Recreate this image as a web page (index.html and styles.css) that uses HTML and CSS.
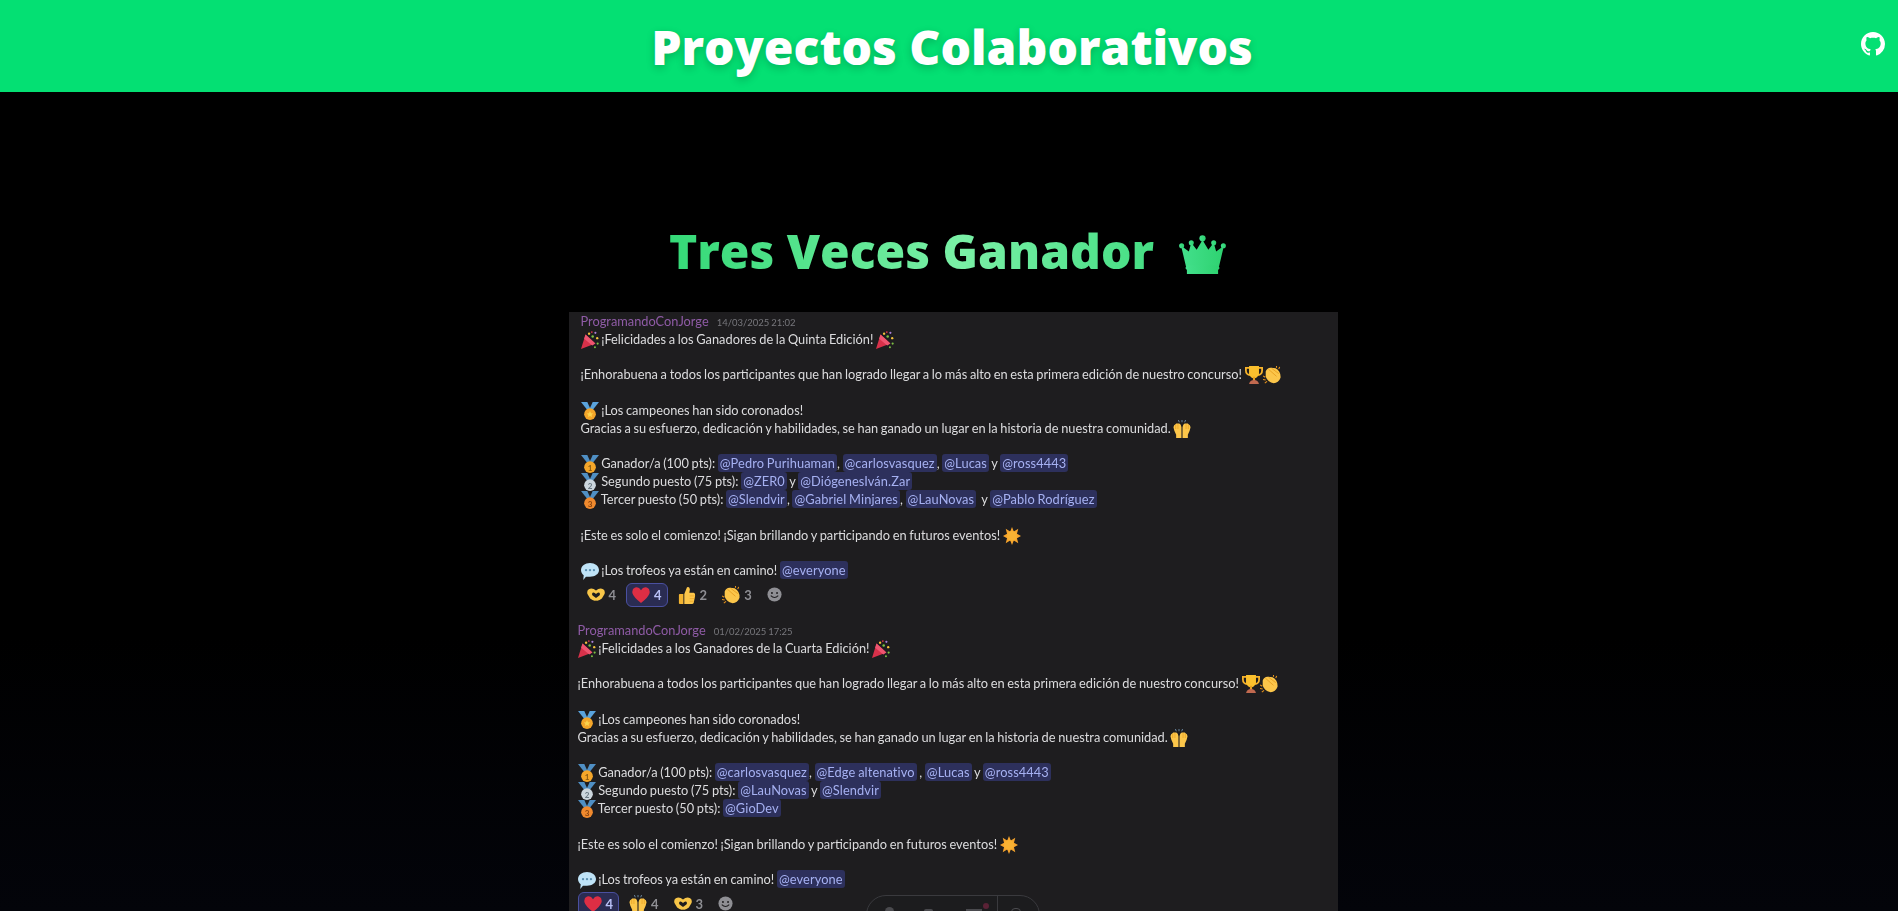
FILE: index.html
```html
<!DOCTYPE html>
<html lang="es">
<head>
    <meta charset="UTF-8">
    <meta name="viewport" content="width=device-width, initial-scale=1.0">
    <title>Proyectos Colaborativos</title>
    <link rel="stylesheet" href="styles.css">
</head>
<body>
    <svg class="sprites" aria-hidden="true">
        <symbol id="popper" viewBox="0 0 20 20">
            <path d="M0 20 L5 4 L16 14 Z" fill="#d8314a"/>
            <path d="M5 4 L16 14 L12.5 16 L3.5 8.5 Z" fill="#ee5570"/>
            <circle cx="9" cy="3" r="1.3" fill="#f5c33b"/><circle cx="13" cy="6" r="1.4" fill="#7ac143"/>
            <circle cx="16" cy="2" r="1.2" fill="#a87fd8"/><circle cx="18" cy="8" r="1.3" fill="#f5c33b"/>
            <circle cx="18.5" cy="14" r="1.2" fill="#7ac143"/><circle cx="12" cy="1.2" r="1" fill="#d8314a"/>
            <circle cx="15.5" cy="18" r="1.1" fill="#7ac143"/>
        </symbol>
        <symbol id="medal" viewBox="0 0 20 20">
            <path d="M0 0 H7 L11 9 H7 Z" fill="#5aa3dc"/>
            <path d="M20 0 H13 L9 9 H13 Z" fill="#5aa3dc"/>
            <circle cx="10" cy="13.5" r="6.5" fill="#f4a62a"/>
            <path d="M10 10 L11.2 12.5 L13.6 12.8 L11.8 14.4 L12.3 16.8 L10 15.6 L7.7 16.8 L8.2 14.4 L6.4 12.8 L8.8 12.5 Z" fill="#fcd34d"/>
        </symbol>
        <symbol id="medal-gold" viewBox="0 0 20 20">
            <path d="M0 0 H7 L11 9 H7 Z" fill="#4f8fc4"/>
            <path d="M20 0 H13 L9 9 H13 Z" fill="#4f8fc4"/>
            <circle cx="10" cy="13.5" r="6.5" fill="#f4a62a"/>
            <text x="10" y="17.5" class="medal-num medal-num-gold">1</text>
        </symbol>
        <symbol id="medal-silver" viewBox="0 0 20 20">
            <path d="M0 0 H7 L11 9 H7 Z" fill="#4f8fc4"/>
            <path d="M20 0 H13 L9 9 H13 Z" fill="#4f8fc4"/>
            <circle cx="10" cy="13.5" r="6.5" fill="#ccd6dd"/>
            <text x="10" y="17.5" class="medal-num medal-num-silver">2</text>
        </symbol>
        <symbol id="medal-bronze" viewBox="0 0 20 20">
            <path d="M0 0 H7 L11 9 H7 Z" fill="#4f8fc4"/>
            <path d="M20 0 H13 L9 9 H13 Z" fill="#4f8fc4"/>
            <circle cx="10" cy="13.5" r="6.5" fill="#f08a2e"/>
            <text x="10" y="17.5" class="medal-num medal-num-bronze">3</text>
        </symbol>
        <symbol id="trophy" viewBox="0 0 20 20">
            <path d="M0 1 H20 V5 Q20 10.5 14 11 H6 Q0 10.5 0 5 Z M2 3 V5 Q2 8.4 5 9 V3 Z M18 3 H15 V9 Q18 8.4 18 5 Z" fill="#f7b32b" fill-rule="evenodd"/>
            <path d="M4.5 0 H15.5 V8 Q14.5 13.5 10 13.5 Q5.5 13.5 4.5 8 Z" fill="#fbc02d"/>
            <rect x="8.8" y="12" width="2.4" height="4.5" fill="#e8a020"/>
            <path d="M4.5 20 Q5.5 15.5 10 15.5 Q14.5 15.5 15.5 20 Z" fill="#c1694f"/>
        </symbol>
        <symbol id="clap" viewBox="0 0 20 20">
            <path d="M3 6 Q5 1.5 9 2 L14 2.5 Q20 6 19.5 13 Q17 19.5 11 19 Q5.5 18 3 12 Z" fill="#fcc64a"/>
            <path d="M6 3.5 L15 11.5 M9.5 2.5 L17.5 8.5" stroke="#e89f20" stroke-width="1"/>
            <path d="M0 11 L2.5 12.5 M0 15 L3 15.5 M2 19 L4.5 17 M15 0 L15 2 M18.5 1 L17.5 3.5" stroke="#e8941c" stroke-width="1.2"/>
        </symbol>
        <symbol id="hands" viewBox="0 0 20 20">
            <path d="M.5 8 Q1 5 2.5 5 L3.5 4 H7 Q9 5 9.4 8 V20 H3.5 V16.5 L1.5 12 Z" fill="#fcc64a"/>
            <path d="M19.5 8 Q19 5 17.5 5 L16.5 4 H13 Q11 5 10.6 8 V20 H16.5 V16.5 L18.5 12 Z" fill="#fcc64a"/>
            <path d="M3 5 V10 M5.5 4.5 V10 M17 5 V10 M14.5 4.5 V10" stroke="#e89f20" stroke-width=".8"/>
            <path d="M6 0 L7 2.5 M10 0 V2.5 M14 0 L13 2.5" stroke="#6f8ea8" stroke-width="1"/>
        </symbol>
        <symbol id="burst" viewBox="0 0 20 20">
            <path d="M10 0 L12 5 L17 2 L15.5 7.5 L20 10 L15.5 12.5 L17 18 L12 15 L10 20 L8 15 L3 18 L4.5 12.5 L0 10 L4.5 7.5 L3 2 L8 5 Z" fill="#f6a42c"/>
            <circle cx="10" cy="10" r="5.5" fill="#f9b233"/>
        </symbol>
        <symbol id="bubble" viewBox="0 0 20 20">
            <path d="M10 1 C15.5 1 20 4.4 20 9 C20 13.4 15.5 16.5 10 16.5 L5.5 16.5 L2.5 20 L3 14.8 C1.2 13.4 0 11.4 0 9 C0 4.4 4.5 1 10 1 Z" fill="#bfe3f7"/>
            <circle cx="5.6" cy="9" r="1.3" fill="#5c8fb0"/><circle cx="10" cy="9" r="1.3" fill="#5c8fb0"/><circle cx="14.4" cy="9" r="1.3" fill="#5c8fb0"/>
        </symbol>
        <symbol id="heart-hands" viewBox="0 0 20 20">
            <path d="M10 5 Q6 1.5 2 3.5 Q-.5 5 .5 9 L3.5 14 Q7 17 10 16 Q13 17 16.5 14 L19.5 9 Q20.5 5 18 3.5 Q14 1.5 10 5 Z" fill="#f7c548"/>
            <path d="M10 9 Q8 6.6 6.2 7.6 Q4.8 8.8 6.2 10.6 L10 13.2 L13.8 10.6 Q15.2 8.8 13.8 7.6 Q12 6.6 10 9 Z" fill="#1e1d1f"/>
        </symbol>
        <symbol id="heart" viewBox="0 0 20 20">
            <path d="M10 18.8 Q1.8 12.5 .5 8 Q-.4 3.4 3.4 1.8 Q7.6 .6 10 4.6 Q12.4 .6 16.6 1.8 Q20.4 3.4 19.5 8 Q18.2 12.5 10 18.8 Z" fill="#dd2e44"/>
        </symbol>
        <symbol id="thumb" viewBox="0 0 20 20">
            <path d="M2 9 H6 V20 H2 Q1 20 1 19 V10 Q1 9 2 9 Z" fill="#f3b431"/>
            <path d="M7 9 L10 1.5 Q13 0 13.2 4 L12.6 7.5 H17.5 Q19.5 8 19 11 L17.5 18.5 Q17 20 15.5 20 H7 Z" fill="#fcc64a"/>
            <path d="M13 11 H18.5 M13 14 H18 M13 17 H17.5" stroke="#e89f20" stroke-width=".7"/>
        </symbol>
        <symbol id="smile" viewBox="0 0 20 20">
            <circle cx="10" cy="10" r="9.4" fill="#8f8f94"/>
            <circle cx="6.6" cy="8" r="1.3" fill="#1e1d1f"/><circle cx="13.4" cy="8" r="1.3" fill="#1e1d1f"/>
            <path d="M5 11.5 Q10 16.5 15 11.5" fill="none" stroke="#1e1d1f" stroke-width="1.4"/>
        </symbol>
    </svg>

    <header class="topbar">
        <h1 class="topbar-title">Proyectos Colaborativos</h1>
        <a class="topbar-link" href="#" aria-label="GitHub">
            <svg viewBox="0 0 16 16" class="github-icon"><path fill="#fff" d="M8 0C3.58 0 0 3.58 0 8c0 3.54 2.29 6.53 5.47 7.59.4.07.55-.17.55-.38 0-.19-.01-.82-.01-1.49-2.01.37-2.53-.49-2.69-.94-.09-.23-.48-.94-.82-1.13-.28-.15-.68-.52-.01-.53.63-.01 1.08.58 1.23.82.72 1.21 1.87.87 2.33.66.07-.52.28-.87.51-1.07-1.78-.2-3.64-.89-3.64-3.95 0-.87.31-1.59.82-2.15-.08-.2-.36-1.02.08-2.12 0 0 .67-.21 2.2.82.64-.18 1.32-.27 2-.27s1.36.09 2 .27c1.53-1.04 2.2-.82 2.2-.82.44 1.1.16 1.92.08 2.12.51.56.82 1.27.82 2.15 0 3.07-1.87 3.75-3.65 3.95.29.25.54.73.54 1.48 0 1.07-.01 1.93-.01 2.2 0 .21.15.46.55.38A8.01 8.01 0 0 0 16 8c0-4.42-3.58-8-8-8z"/></svg>
        </a>
    </header>

    <main class="content">
        <div class="section-head">
            <h2 class="section-title">Tres Veces Ganador</h2>
            <svg class="crown" viewBox="0 0 48 40">
                <defs>
                    <linearGradient id="crownFill" x1="0" y1="0" x2="1" y2="0">
                        <stop offset="0" stop-color="#43e08c"/>
                        <stop offset="1" stop-color="#2ed270"/>
                    </linearGradient>
                </defs>
                <g fill="url(#crownFill)">
                    <path d="M24 5 L30 15 L35.5 8 L38 17 L46 11 L41 32 H7 L2 11 L10 17 L12.5 8 L18 15 Z"/>
                    <circle cx="24" cy="3.4" r="3.2"/>
                    <circle cx="12.5" cy="8" r="2.6"/><circle cx="35.5" cy="8" r="2.6"/>
                    <circle cx="2.6" cy="11" r="2.6"/><circle cx="45.4" cy="11" r="2.6"/>
                    <path d="M7.5 31 H40.5 L41.5 34 L40 36 V40 H8 V36 L6.5 34 Z"/>
                </g>
            </svg>
        </div>

        <div class="shot">
            <article class="msg msg-first">
                <p class="msg-head"><span class="msg-name">ProgramandoConJorge</span><span class="msg-date">14/03/2025 21:02</span></p>
                <p class="line"><svg class="emo"><use href="#popper"/></svg> ¡Felicidades a los Ganadores de la Quinta Edición! <svg class="emo"><use href="#popper"/></svg></p>
                <p class="line">&nbsp;</p>
                <p class="line">¡Enhorabuena a todos los participantes que han logrado llegar a lo más alto en esta primera edición de nuestro concurso! <svg class="emo"><use href="#trophy"/></svg><svg class="emo"><use href="#clap"/></svg></p>
                <p class="line">&nbsp;</p>
                <p class="line"><svg class="emo"><use href="#medal"/></svg> ¡Los campeones han sido coronados!</p>
                <p class="line">Gracias a su esfuerzo, dedicación y habilidades, se han ganado un lugar en la historia de nuestra comunidad. <svg class="emo"><use href="#hands"/></svg></p>
                <p class="line">&nbsp;</p>
                <p class="line"><svg class="emo"><use href="#medal-gold"/></svg> Ganador/a (100 pts): <span class="at">@Pedro Purihuaman</span>, <span class="at">@carlosvasquez</span>, <span class="at">@Lucas</span> y <span class="at">@ross4443</span></p>
                <p class="line"><svg class="emo"><use href="#medal-silver"/></svg> Segundo puesto (75 pts): <span class="at">@ZER0</span> y <span class="at">@DiógenesIván.Zar</span></p>
                <p class="line"><svg class="emo"><use href="#medal-bronze"/></svg> Tercer puesto (50 pts): <span class="at">@Slendvir</span>, <span class="at">@Gabriel Minjares</span>, <span class="at">@LauNovas</span> &nbsp;y <span class="at">@Pablo Rodríguez</span></p>
                <p class="line">&nbsp;</p>
                <p class="line">¡Este es solo el comienzo! ¡Sigan brillando y participando en futuros eventos! <svg class="emo"><use href="#burst"/></svg></p>
                <p class="line">&nbsp;</p>
                <p class="line"><svg class="emo"><use href="#bubble"/></svg> ¡Los trofeos ya están en camino! <span class="at">@everyone</span></p>
                <div class="reactions reactions-first">
                    <span class="react"><svg class="emo"><use href="#heart-hands"/></svg>4</span>
                    <span class="react react-on"><svg class="emo"><use href="#heart"/></svg>4</span>
                    <span class="react"><svg class="emo"><use href="#thumb"/></svg>2</span>
                    <span class="react"><svg class="emo"><use href="#clap"/></svg>3</span>
                    <span class="react"><svg class="emo emo-add"><use href="#smile"/></svg></span>
                </div>
            </article>

            <article class="msg msg-second">
                <p class="msg-head"><span class="msg-name">ProgramandoConJorge</span><span class="msg-date">01/02/2025 17:25</span></p>
                <p class="line"><svg class="emo"><use href="#popper"/></svg> ¡Felicidades a los Ganadores de la Cuarta Edición! <svg class="emo"><use href="#popper"/></svg></p>
                <p class="line">&nbsp;</p>
                <p class="line">¡Enhorabuena a todos los participantes que han logrado llegar a lo más alto en esta primera edición de nuestro concurso! <svg class="emo"><use href="#trophy"/></svg><svg class="emo"><use href="#clap"/></svg></p>
                <p class="line">&nbsp;</p>
                <p class="line"><svg class="emo"><use href="#medal"/></svg> ¡Los campeones han sido coronados!</p>
                <p class="line">Gracias a su esfuerzo, dedicación y habilidades, se han ganado un lugar en la historia de nuestra comunidad. <svg class="emo"><use href="#hands"/></svg></p>
                <p class="line">&nbsp;</p>
                <p class="line"><svg class="emo"><use href="#medal-gold"/></svg> Ganador/a (100 pts): <span class="at">@carlosvasquez</span>, <span class="at">@Edge altenativo</span> , <span class="at">@Lucas</span> y <span class="at">@ross4443</span></p>
                <p class="line"><svg class="emo"><use href="#medal-silver"/></svg> Segundo puesto (75 pts): <span class="at">@LauNovas</span> y <span class="at">@Slendvir</span></p>
                <p class="line"><svg class="emo"><use href="#medal-bronze"/></svg> Tercer puesto (50 pts): <span class="at">@GioDev</span></p>
                <p class="line">&nbsp;</p>
                <p class="line">¡Este es solo el comienzo! ¡Sigan brillando y participando en futuros eventos! <svg class="emo"><use href="#burst"/></svg></p>
                <p class="line">&nbsp;</p>
                <p class="line"><svg class="emo"><use href="#bubble"/></svg> ¡Los trofeos ya están en camino! <span class="at">@everyone</span></p>
                <div class="reactions">
                    <span class="react react-on"><svg class="emo"><use href="#heart"/></svg>4</span>
                    <span class="react"><svg class="emo"><use href="#hands"/></svg>4</span>
                    <span class="react"><svg class="emo"><use href="#heart-hands"/></svg>3</span>
                    <span class="react"><svg class="emo emo-add"><use href="#smile"/></svg></span>
                </div>
            </article>

            <div class="floatbar">
                <span class="floatbar-icon floatbar-user"></span>
                <span class="floatbar-icon floatbar-cam"></span>
                <span class="floatbar-icon floatbar-dash"></span>
                <span class="floatbar-dot"></span>
                <span class="floatbar-sep"></span>
                <span class="floatbar-icon floatbar-bag"></span>
            </div>
        </div>
    </main>
</body>
</html>
```
FILE: styles.css
```css
* {
    box-sizing: border-box;
}

html, body {
    height: 100%;
}

body {
    margin: 0;
    background: linear-gradient(180deg, #000 70%, #03040a 100%);
    font-family: "Lato", sans-serif;
    overflow: hidden;
}

.sprites {
    display: none;
}

.topbar {
    height: 92px;
    padding-left: 6px;
    background-color: #04e073;
    display: flex;
    align-items: center;
    justify-content: center;
    position: relative;
}

.topbar-title {
    margin: 0;
    color: #fff;
    font-family: "Open Sans", sans-serif;
    font-size: 48px;
    font-weight: 800;
    text-shadow: 0 3px 8px rgba(0, 0, 0, 0.2);
}

.topbar-link {
    position: absolute;
    top: 32px;
    right: 13px;
    line-height: 0;
}

.github-icon {
    width: 24px;
    height: 24px;
}

.content {
    display: flex;
    flex-direction: column;
    align-items: center;
    padding-top: 126px;
}

.section-head {
    height: 94px;
    padding-right: 3px;
    display: flex;
    align-items: flex-start;
    gap: 25px;
}

.section-title {
    margin: 0;
    font-family: "Open Sans", sans-serif;
    font-size: 48px;
    line-height: 66px;
    font-weight: 800;
    background: linear-gradient(90deg, #34d977, #7af0a6 60%, #45de84);
    -webkit-background-clip: text;
    background-clip: text;
    color: transparent;
}

.crown {
    width: 47px;
    height: 39px;
    margin-top: 17px;
}

.shot {
    width: 769px;
    height: 600px;
    margin-left: 8px;
    background-color: #1e1d1f;
    position: relative;
    overflow: hidden;
    filter: blur(0.4px);
    flex-shrink: 0;
}

.msg-first {
    padding: 1px 12px 0;
}

.msg-second {
    padding: 15px 9px 0;
}

.msg-head,
.line {
    margin: 0;
    height: 17.8px;
    line-height: 17.8px;
    font-size: 12.8px;
    word-spacing: -0.6px;
    color: #dcdcde;
    white-space: nowrap;
}

.msg-name {
    color: #8f5ba6;
}

.msg-date {
    margin-left: 8px;
    color: #77777c;
    font-size: 9.5px;
}

.at {
    background-color: #2d305c;
    color: #a6b1f2;
    padding: 1px 2px;
    border-radius: 3px;
    letter-spacing: 0.1px;
}

.emo {
    width: 18px;
    height: 18px;
    vertical-align: -5px;
}

.emo-add {
    width: 15px;
    height: 15px;
}

.medal-num {
    font-family: "Lato", sans-serif;
    font-size: 9px;
    font-weight: 700;
    text-anchor: middle;
}

.medal-num-gold {
    fill: #8a5a10;
}

.medal-num-silver {
    fill: #66757f;
}

.medal-num-bronze {
    fill: #8a4510;
}

.reactions {
    display: flex;
    align-items: center;
    gap: 5px;
    height: 24px;
    margin-top: 3px;
    font-size: 13px;
    font-weight: 700;
    color: #8f8f94;
}

.reactions-first {
    padding-left: 1px;
}

.react {
    display: flex;
    align-items: center;
    gap: 4px;
    height: 24px;
    padding: 0 5px;
}

.react-on {
    padding: 0 5px;
    gap: 4px;
    border: 1px solid #4a50a0;
    border-radius: 6px;
    background-color: #2a2c52;
    color: #b9c1f6;
}

.floatbar {
    position: absolute;
    left: 297px;
    top: 583px;
    width: 174px;
    height: 40px;
    border: 1px solid #3a3a3e;
    border-radius: 20px;
    background-color: #1c1c1e;
}

.floatbar-sep {
    position: absolute;
    left: 130px;
    top: 0;
    width: 1px;
    height: 100%;
    background-color: #3a3a3e;
}

.floatbar-icon {
    position: absolute;
    background-color: #4a4a4e;
}

.floatbar-user {
    left: 18px;
    top: 11px;
    width: 9px;
    height: 12px;
    border-radius: 5px 5px 0 0;
}

.floatbar-cam {
    left: 57px;
    top: 13px;
    width: 9px;
    height: 9px;
    border-radius: 2px;
}

.floatbar-dash {
    left: 99px;
    top: 13px;
    width: 16px;
    height: 2px;
}

.floatbar-dot {
    position: absolute;
    left: 116px;
    top: 7px;
    width: 6px;
    height: 6px;
    border-radius: 50%;
    background-color: #5a2236;
}

.floatbar-bag {
    left: 144px;
    top: 12px;
    width: 10px;
    height: 10px;
    border-radius: 4px 4px 0 0;
    background-color: transparent;
    border: 1px solid #4a4a4e;
}
```
